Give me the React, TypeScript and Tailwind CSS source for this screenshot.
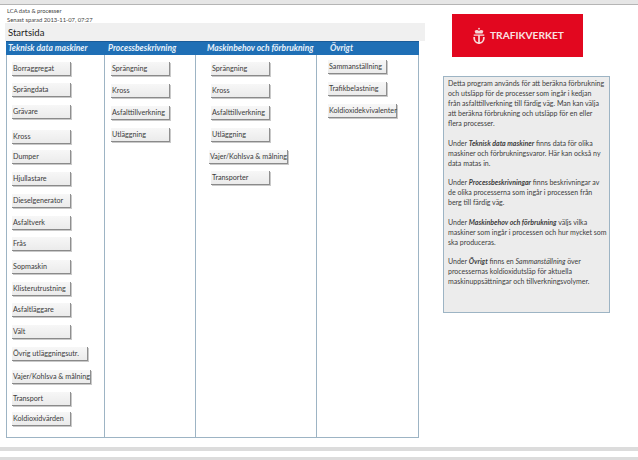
const font = { fontFamily: 'Lato, "Open Sans", sans-serif' };

type Item = { label: string; w: string; top: string; extra?: string };

function Btn({ label, w, top, extra }: Item) {
  return (
    <div
      className={`${w} ${top} ${extra ?? ""} h-[14px] shrink-0 flex items-center pl-[1px] bg-gradient-to-b from-[#f7f7f7] to-[#ebebeb] border-r border-b border-r-[#8f8f8f] border-b-[#8a8a8a] shadow-[1px_1px_0_#c9c9c9] text-[7.2px] leading-none text-[#3c3c3c] whitespace-nowrap`}
    >
      {label}
    </div>
  );
}

const col1: Item[] = [
  { label: "Borraggregat", w: "w-[59px]", top: "mt-[7px]" },
  { label: "Sprängdata", w: "w-[59px]", top: "mt-[7px]" },
  { label: "Grävare", w: "w-[59px]", top: "mt-[8px]" },
  { label: "Kross", w: "w-[59px]", top: "mt-[11px]" },
  { label: "Dumper", w: "w-[59px]", top: "mt-[6px]" },
  { label: "Hjullastare", w: "w-[59px]", top: "mt-[8px]" },
  { label: "Dieselgenerator", w: "w-[59px]", top: "mt-[8px]" },
  { label: "Asfaltverk", w: "w-[59px]", top: "mt-[8px]" },
  { label: "Frås", w: "w-[59px]", top: "mt-[7px]" },
  { label: "Sopmaskin", w: "w-[59px]", top: "mt-[9px]" },
  { label: "Klisterutrustning", w: "w-[59px]", top: "mt-[8px]" },
  { label: "Asfaltläggare", w: "w-[59px]", top: "mt-[7px]" },
  { label: "Vält", w: "w-[59px]", top: "mt-[8px]" },
  { label: "Övrig utläggningsutr.", w: "w-[76px]", top: "mt-[8px]" },
  { label: "Vajer/Kohlsva & målning", w: "w-[79px]", top: "mt-[9px]" },
  { label: "Transport", w: "w-[59px]", top: "mt-[8px]" },
  { label: "Koldioxidvärden", w: "w-[59px]", top: "mt-[6px]" },
];
const col2: Item[] = [
  { label: "Sprängning", w: "w-[59px]", top: "mt-[7px]" },
  { label: "Kross", w: "w-[59px]", top: "mt-[8px]" },
  { label: "Asfalttillverkning", w: "w-[59px]", top: "mt-[8px]" },
  { label: "Utläggning", w: "w-[59px]", top: "mt-[8px]" },
];
const col3: Item[] = [
  { label: "Sprängning", w: "w-[59px]", top: "mt-[7px]" },
  { label: "Kross", w: "w-[59px]", top: "mt-[8px]" },
  { label: "Asfalttillverkning", w: "w-[59px]", top: "mt-[8px]" },
  { label: "Utläggning", w: "w-[59px]", top: "mt-[8px]" },
  { label: "Vajer/Kohlsva & målning", w: "w-[79px]", top: "mt-[8px]", extra: "-ml-[2px]" },
  { label: "Transporter", w: "w-[59px]", top: "mt-[7px]" },
];
const col4: Item[] = [
  { label: "Sammanställning", w: "w-[59px]", top: "mt-[5px]" },
  { label: "Trafikbelastning", w: "w-[59px]", top: "mt-[8px]" },
  { label: "Koldioxidekvivalenter", w: "w-[69px]", top: "mt-[8px]" },
];

const heads = [
  { t: "Teknisk data maskiner", w: "w-[98px]", pl: "pl-[2px]" },
  { t: "Processbeskrivning", w: "w-[91px]", pl: "pl-[4px]" },
  { t: "Maskinbehov och förbrukning", w: "w-[121px]", pl: "pl-[12px]" },
  { t: "Övrigt", w: "w-[103px]", pl: "pl-[14px]" },
];

function Column({ items, className }: { items: Item[]; className: string }) {
  return <div className={`flex flex-col ${className}`}>{items.map((i) => <Btn key={i.label} {...i} />)}</div>;
}

export default function App() {
  return (
    <div style={font} className="w-[638px] h-[460px] bg-white overflow-hidden flex flex-col">
      <div className="h-[5px] shrink-0 bg-[#e6e6e6] border-b border-b-[#b5b5b5]" />
      <div className="flex flex-1 min-h-0">
        <div className="w-[432px] shrink-0 flex flex-col">
          <div className="pl-[7px] pt-[2px] h-[18px] text-[5.8px] leading-[8.5px] text-[#444]">
            <div>LCA data &amp; processer</div>
            <div>Senast sparad 2013-11-07, 07:27</div>
          </div>
          <div className="ml-[5px] w-[420px] h-[18px] bg-[#f0f0f0] pl-[3px] text-[9.5px] leading-[19px] text-[#222]">Startsida</div>
          <div className="ml-[6px] w-[413px] h-[14px] flex bg-[#1f6fb5] border-t border-t-[#1a5c99]">
            {heads.map((h) => (
              <div key={h.t} className={`${h.w} ${h.pl} text-[8.5px] leading-[12px] font-bold italic text-[#e8f2fb] whitespace-nowrap`}>{h.t}</div>
            ))}
          </div>
          <div className="ml-[6px] w-[413px] h-[383px] flex border border-t-0 border-[#9db4c4]">
            <Column items={col1} className="w-[98px] pl-[5px] border-r border-r-[#9db4c4]" />
            <Column items={col2} className="w-[91px] pl-[6px] border-r border-r-[#9db4c4]" />
            <Column items={col3} className="w-[121px] pl-[15px] border-r border-r-[#9db4c4]" />
            <Column items={col4} className="flex-1 pl-[11px]" />
          </div>
        </div>
        <div className="flex-1 flex flex-col">
          <div className="ml-[20px] mt-[9px] w-[131px] h-[43px] bg-[#e2071f] flex items-center pl-[20px] gap-[4px]">
            <svg viewBox="0 0 16 20" className="w-[14px] h-[18px]" fill="none" stroke="#f7dada" strokeWidth="1.5">
              <circle cx="8" cy="1.6" r="1" fill="#f7dada" stroke="none" />
              <path d="M3 4.2c1.5-1.6 3.5-1.6 5 0 1.5-1.6 3.5-1.6 5 0l-1 3H4z" fill="#f7dada" stroke="none" />
              <path d="M2 9h12" />
              <path d="M8 9v10" strokeWidth="2" />
              <path d="M2.5 11v1.5a5.5 5.5 0 0 0 11 0V11" strokeWidth="2" />
            </svg>
            <span className="text-[10.2px] font-bold text-[#f9e2e2] leading-none">TRAFIKVERKET</span>
          </div>
          <div className="ml-[11px] mt-[19px] w-[167px] h-[237px] bg-[#ececec] border border-[#9db4c4] pl-[4px] pt-[1px] text-[7px] leading-[10px] text-[#3c3c3c] whitespace-nowrap overflow-hidden">
            <p>Detta program används för att beräkna förbrukning<br />och utsläpp  för de processer som ingår i kedjan<br />från asfalttillverkning till färdig väg.  Man kan välja<br />att beräkna förbrukning  och utsläpp för en eller<br />flera processer.</p>
            <p className="mt-[10px]">Under <b><i>Teknisk data maskiner</i></b> finns data  för olika<br />maskiner och förbrukningsvaror. Här  kan också ny<br />data matas in.</p>
            <p className="mt-[9px]">Under <b><i>Processbeskrivningar</i></b>  finns beskrivningar av<br />de olika processerna som ingår i processen från<br />berg till färdig väg.</p>
            <p className="mt-[10px]">Under <b><i>Maskinbehov och förbrukning</i></b> väljs vilka<br />maskiner som ingår i processen och hur mycket som<br />ska produceras.</p>
            <p className="mt-[9px]">Under <b><i>Övrigt</i></b> finns en <i>Sammanställning</i> över<br />processernas koldioxidutsläp för aktuella<br />maskinuppsättningar och tillverkningsvolymer.</p>
          </div>
        </div>
      </div>
      <div className="h-[4px] shrink-0 mb-[6px] bg-[#dcdcdc]" />
      <div className="h-[3px] shrink-0 bg-[#dcdcdc]" />
    </div>
  );
}
